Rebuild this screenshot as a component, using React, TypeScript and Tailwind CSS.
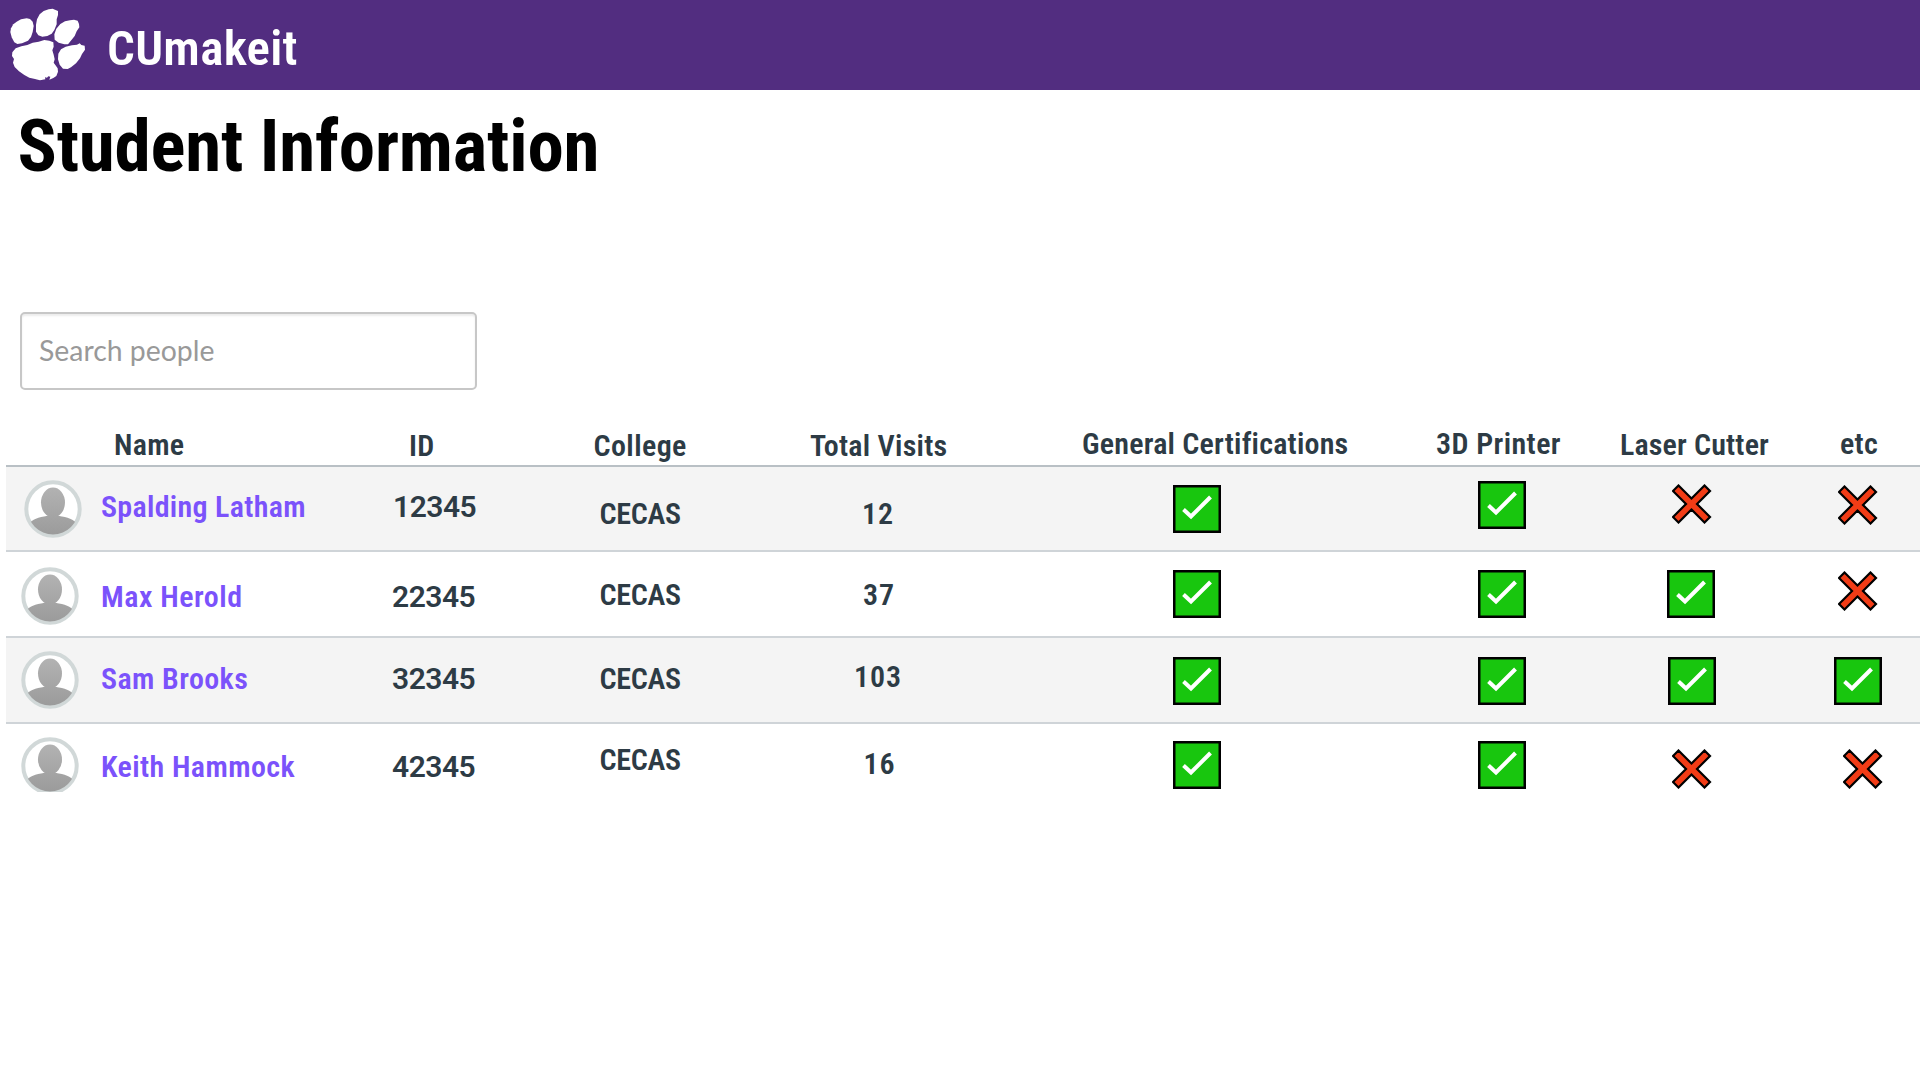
type Mark = { ok: boolean; at: string };
type Txt = { text: string; at: string };

const BASE = "font-[Roboto,sans-serif] [font-stretch:75%] font-semibold whitespace-nowrap";
const CELL = "text-[30px] leading-[32px]";

function Paw() {
  return (
    <svg viewBox="27 24 231 219" className="h-[73px] w-[77px] shrink-0 fill-white" aria-hidden="true">
      <path d="M31 96 L33 85 L40 73 L50 65 L63 58 L80 55 L90 57 L98 65 L101 78 L98 96 L93 111 L84 122 L66 130 L52 132 L43 127 L35 112 Z" />
      <path d="M108 74 L111 58 L119 43 L131 33 L146 28 L158 26 L165 29 L174 33 L174 45 L170 58 L170 73 L163 90 L155 101 L142 108 L127 110 L115 106 L108 95 Z" />
      <path d="M163 103 L169 86 L181 72 L195 64 L210 61 L222 59 L233 62 L237 72 L238 82 L230 94 L224 108 L215 119 L204 133 L193 133 L176 128 L164 119 Z" />
      <path d="M175 161 L183 148 L197 140 L216 136 L231 134 L239 130 L244 135 L254 137 L255 149 L246 162 L240 175 L228 190 L213 202 L203 207 L189 206 L179 194 L174 178 Z" />
      <path d="M37 157 L47 145 L64 139 L82 135 L98 128 L116 125 L133 120 L148 122 L160 127 L161 140 L157 151 L161 164 L164 178 L161 188 L166 195 L173 205 L174 215 L169 228 L160 234 L148 239 L151 230 L145 229 L141 233 L135 232 L136 238 L120 241 L105 237 L88 233 L73 225 L57 214 L44 201 L39 188 L42 177 L36 168 Z" />
    </svg>
  );
}

function Avatar({ id, at }: { id: string; at: string }) {
  return (
    <div className={at}>
      <svg viewBox="0 0 58 58" className="h-[58px] w-[58px]" aria-hidden="true">
        <defs>
          <linearGradient id={id} x1="0" y1="6" x2="0" y2="55" gradientUnits="userSpaceOnUse">
            <stop offset="0" stopColor="#b3b3b3" />
            <stop offset="1" stopColor="#9b9b9b" />
          </linearGradient>
          <clipPath id={id + "c"}>
            <circle cx="29" cy="29" r="25.5" />
          </clipPath>
        </defs>
        <circle cx="29" cy="29" r="26.7" fill="#fff" stroke="#d1d8d8" strokeWidth="4" />
        <g clipPath={`url(#${id}c)`} fill={`url(#${id})`}>
          <ellipse cx="29" cy="22.5" rx="12" ry="15" />
          <path d="M25 32 H33 C33 35.500 34 36 38 36.500 C46 37.500 52 41 54 46 V58 H4 V46 C6 41 12 37.500 20 36.500 C24 36 25 35.500 25 32 Z" />
        </g>
      </svg>
    </div>
  );
}

function Check() {
  return (
    <svg viewBox="0 0 48 48" className="h-[48px] w-[48px]" aria-hidden="true">
      <rect x="1.250" y="1.250" width="45.500" height="45.500" fill="#18c60e" stroke="#000" strokeWidth="2.500" />
      <path d="M10.500 24.500 L18 31.500 L37.500 12" fill="none" stroke="#fff" strokeWidth="4" />
    </svg>
  );
}

function Cross() {
  return (
    <svg viewBox="0 0 40 40" className="h-[40px] w-[40px]" aria-hidden="true">
      <path
        d="M6.500 1.500 L19.500 14.500 L32.500 1.500 L38 7 L25 20 L38 33 L32.500 38.500 L19.500 25.500 L6.500 38.500 L1 33 L14 20 L1 7 Z"
        fill="#f23c16"
        stroke="#000"
        strokeWidth="2.200"
      />
    </svg>
  );
}

const headers: Txt[] = [
  { text: "Name", at: "pl-[108px] pt-[2px] tracking-[0.3px]" },
  { text: "ID", at: "pl-[29px] pt-[3px] tracking-[0.3px]" },
  { text: "College", at: "pl-[33.5px] pt-[3px] tracking-[0.4px]" },
  { text: "Total Visits", at: "pl-[30px] pt-[3px] tracking-[0.25px]" },
  { text: "General Certifications", at: "pl-[42px] pt-[1px] tracking-[0.2px]" },
  { text: "3D Printer", at: "pl-[36px] pt-[1px] tracking-[0.4px]" },
  { text: "Laser Cutter", at: "pl-[20px] pt-[2px] tracking-[0.15px]" },
  { text: "etc", at: "pl-[50px] pt-[1px] tracking-[0.3px]" },
];

const rows: {
  box: string;
  avatar: string;
  name: Txt;
  id: Txt;
  college: Txt;
  visits: Txt;
  marks: Mark[];
}[] = [
  {
    box: "h-[85px] border-b-2 bg-[#f4f4f4]",
    avatar: "pl-[18px] pt-[13px]",
    name: { text: "Spalding Latham", at: "pt-[24px] pl-[19px] tracking-[0.3px]" },
    id: { text: "12345", at: "pt-[24px] pl-[13px]" },
    college: { text: "CECAS", at: "pt-[31px]" },
    visits: { text: "12", at: "pt-[31px] pl-[82px]" },
    marks: [
      { ok: true, at: "pl-[133px] pt-[18px]" },
      { ok: true, at: "pl-[78px] pt-[14px]" },
      { ok: false, at: "pl-[72px] pt-[17px]" },
      { ok: false, at: "pl-[48px] pt-[18px]" },
    ],
  },
  {
    box: "h-[86px] border-b-2 bg-white",
    avatar: "pl-[15px] pt-[15px]",
    name: { text: "Max Herold", at: "pt-[29px] pl-[22px] tracking-[0.5px]" },
    id: { text: "22345", at: "pt-[29px] pl-[12px]" },
    college: { text: "CECAS", at: "pt-[27px]" },
    visits: { text: "37", at: "pt-[27px] pl-[83px]" },
    marks: [
      { ok: true, at: "pl-[133px] pt-[18px]" },
      { ok: true, at: "pl-[78px] pt-[18px]" },
      { ok: true, at: "pl-[67px] pt-[18px]" },
      { ok: false, at: "pl-[48px] pt-[19px]" },
    ],
  },
  {
    box: "h-[86px] border-b-2 bg-[#f4f4f4]",
    avatar: "pl-[15px] pt-[13px]",
    name: { text: "Sam Brooks", at: "pt-[25px] pl-[22px] tracking-[0.4px]" },
    id: { text: "32345", at: "pt-[25px] pl-[12px]" },
    college: { text: "CECAS", at: "pt-[25px]" },
    visits: { text: "103", at: "pt-[23px] pl-[74px]" },
    marks: [
      { ok: true, at: "pl-[133px] pt-[19px]" },
      { ok: true, at: "pl-[78px] pt-[19px]" },
      { ok: true, at: "pl-[68px] pt-[19px]" },
      { ok: true, at: "pl-[44px] pt-[19px]" },
    ],
  },
  {
    box: "h-[68px] overflow-hidden bg-white",
    avatar: "pl-[15px] pt-[13px]",
    name: { text: "Keith Hammock", at: "pt-[27px] pl-[22px] tracking-[0.4px]" },
    id: { text: "42345", at: "pt-[27px] pl-[12px]" },
    college: { text: "CECAS", at: "pt-[20px]" },
    visits: { text: "16", at: "pt-[24px] pl-[83.5px]" },
    marks: [
      { ok: true, at: "pl-[133px] pt-[17px]" },
      { ok: true, at: "pl-[78px] pt-[17px]" },
      { ok: false, at: "pl-[72px] pt-[25px]" },
      { ok: false, at: "pl-[53px] pt-[25px]" },
    ],
  },
];

const GRID = "grid grid-cols-[374px_180px_220px_260px_360px_200px_190px_1fr] items-start";

export default function App() {
  return (
    <div className="flex h-[1080px] w-[1920px] flex-col overflow-hidden bg-white text-[#2d3b45]">
      <header className={`${BASE} flex h-[90px] shrink-0 bg-[#522d80] pl-[9px] pt-[8px] text-white`}>
        <Paw />
        <span className="pl-[21px] pt-[13px] text-[49px] leading-[56px] tracking-[0.3px]">CUmakeit</span>
      </header>
      <h1 className="h-[95px] shrink-0 pl-[17.5px] pt-[16px] font-[Roboto,sans-serif] text-[73px] leading-[80px] font-bold tracking-[-0.2px] whitespace-nowrap text-black [font-stretch:75%]">
        Student Information
      </h1>
      <div className="mt-[127px] ml-[20px] h-[78px] w-[457px] shrink-0 rounded-[5px] border-[2.5px] border-[#c7c7c7] pl-[17px] pt-[18px] font-[Lato,sans-serif] text-[28.4px] leading-[36px] text-[#999] shadow-[inset_0_2px_2px_rgba(0,0,0,0.08)]">
        Search people
      </div>
      <div className="mt-[37px] ml-[6px]">
        <div className={`${GRID} ${BASE} ${CELL} h-[40px] border-b-2 border-[#b9c0c5]`}>
          {headers.map((h) => (
            <div key={h.text} className={h.at}>{h.text}</div>
          ))}
        </div>
        {rows.map((r, i) => (
          <div key={r.name.text} className={`${GRID} ${BASE} ${CELL} border-[#cfd4d8] ${r.box}`}>
            <div className="flex">
              <Avatar id={"av" + i} at={r.avatar} />
              <div className={`text-[#7b52fb] ${r.name.at}`}>{r.name.text}</div>
            </div>
            <div className={`tracking-[-0.5px] [font-stretch:90%] ${r.id.at}`}>{r.id.text}</div>
            <div className={`pl-[39.5px] tracking-[-0.3px] ${r.college.at}`}>{r.college.text}</div>
            <div className={`tracking-[0.9px] ${r.visits.at}`}>{r.visits.text}</div>
            {r.marks.map((m, j) => (
              <div key={j} className={m.at}>{m.ok ? <Check /> : <Cross />}</div>
            ))}
          </div>
        ))}
      </div>
    </div>
  );
}
